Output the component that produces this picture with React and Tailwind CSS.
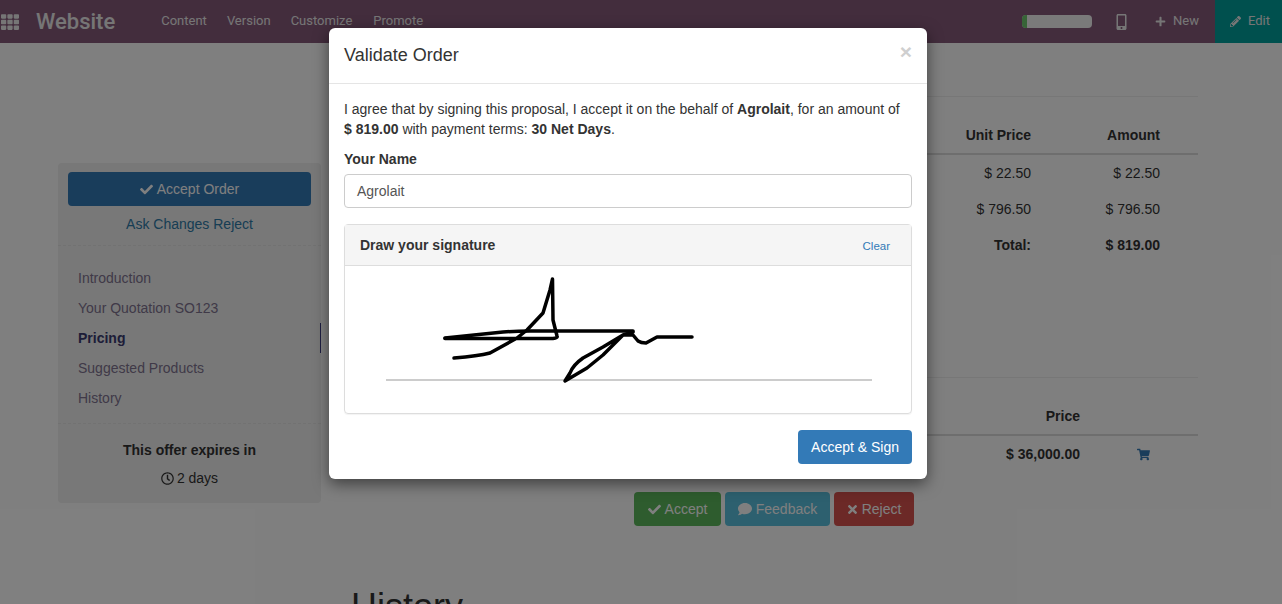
import { FaTh, FaMobileAlt, FaPlus, FaPencilAlt, FaCheck, FaComment, FaTimes, FaShoppingCart, FaRegClock } from "react-icons/fa";

function Navbar() {
  return (
    <div className="flex h-[43px] items-center bg-[#875a7b] font-['Roboto',sans-serif] text-[#ededed]">
      <FaTh className="ml-[1px] h-[18px] w-[18px]" />
      <span className="ml-[17px] mr-[46px] -mt-[1px] text-[22px] font-medium">Website</span>
      <div className="-mt-[1px] flex gap-5 text-[13px]">
        <span>Content</span>
        <span>Version</span>
        <span>Customize</span>
        <span className="ml-[1px]">Promote</span>
      </div>
      <div className="ml-auto flex h-full items-center">
        <div className="-mt-[1px] flex h-[13px] w-[70px] overflow-hidden rounded bg-[#f5f5f5]">
          <div className="w-[5px] bg-[#6ec96e]" />
        </div>
        <FaMobileAlt className="ml-[24px] h-[16px] w-[11px]" />
        <FaPlus className="ml-[28px] h-[11px] w-[11px]" />
        <span className="ml-[7px] -mt-[1px] text-[13px]">New</span>
        <div className="ml-[16px] flex h-full w-[67px] items-center bg-[#00a09d] pb-[1px] pl-[15px] text-[13px]">
          <FaPencilAlt className="mr-[7px] h-[11px] w-[11px]" />
          <span>Edit</span>
        </div>
      </div>
    </div>
  );
}

function Sidebar() {
  const items = ["Introduction", "Your Quotation SO123", "Pricing", "Suggested Products", "History"];
  return (
    <div className="ml-[58px] mt-[120px] h-[340px] w-[263px] shrink-0 rounded bg-[#f0f0f0]">
      <div className="border-b border-dashed border-[#e4e4e4] px-[10px] pb-[10px] pt-[9px] text-center">
        <div className="flex h-[34px] items-center justify-center rounded bg-[#337ab7] text-white">
          <FaCheck className="mr-[4px] h-[13px] w-[13px]" />
          Accept Order
        </div>
        <div className="mt-[8px] text-[#2f7ba8]">Ask Changes Reject</div>
      </div>
      <div className="border-b border-dashed border-[#e4e4e4] pb-[10px] pt-[17px]">
        {items.map((item) => (
          <div
            key={item}
            className={
              item === "Pricing"
                ? "h-[30px] border-r border-[#3a3a80] pl-[20px] leading-[30px] font-bold text-[#3a3a70]"
                : "h-[30px] pl-[20px] leading-[30px] text-[#807490]"
            }
          >
            {item}
          </div>
        ))}
      </div>
      <div className="pt-[16px] text-center text-[#333]">
        <div className="font-bold">This offer expires in</div>
        <div className="mt-[7px] flex items-center justify-center">
          <FaRegClock className="mr-[3px] h-[13px] w-[13px]" />2 days
        </div>
      </div>
    </div>
  );
}

function Main() {
  return (
    <div className="ml-[30px] w-[847px] pt-[53px] text-[#333]">
      <div className="border-t border-[#eee]" />
      <div className="mt-[18px] flex h-[40px] items-center justify-end border-b-2 border-[#ddd] pr-[38px] pt-[2px] font-bold">
        <span>Unit Price</span>
        <span className="w-[129px] text-right">Amount</span>
      </div>
      <div className="flex h-[36px] items-center justify-end pr-[38px]">
        <span>$ 22.50</span>
        <span className="w-[129px] text-right">$ 22.50</span>
      </div>
      <div className="flex h-[36px] items-center justify-end pr-[38px]">
        <span>$ 796.50</span>
        <span className="w-[129px] text-right">$ 796.50</span>
      </div>
      <div className="flex h-[36px] items-center justify-end pr-[38px] font-bold">
        <span>Total:</span>
        <span className="w-[129px] text-right">$ 819.00</span>
      </div>
      <div className="mt-[114px] border-t border-[#eee]" />
      <div className="flex h-[58px] items-end justify-end border-b-2 border-[#ddd] pb-[7px] pr-[118px] font-bold">
        Price
      </div>
      <div className="flex h-[37px] items-center justify-end pr-[48px]">
        <span className="font-bold">$ 36,000.00</span>
        <FaShoppingCart className="ml-[57px] h-[13px] w-[13px] text-[#337ab7]" />
      </div>
      <div className="mt-[19px] flex gap-1 pl-[283px] text-white">
        <div className="flex h-[34px] w-[87px] items-center justify-center rounded bg-[#5cb85c]">
          <FaCheck className="mr-[4px] h-[13px] w-[13px]" />
          Accept
        </div>
        <div className="flex h-[34px] w-[105px] items-center justify-center rounded bg-[#5bc0de]">
          <FaComment className="mr-[4px] h-[14px] w-[14px]" />
          Feedback
        </div>
        <div className="flex h-[34px] w-[80px] items-center justify-center rounded bg-[#d9534f]">
          <FaTimes className="mr-[4px] h-[13px] w-[11px]" />
          Reject
        </div>
      </div>
      <h1 className="mt-[61px] text-[36px] leading-[40px] text-[#333]">History</h1>
    </div>
  );
}

function Signature() {
  return (
    <svg className="block h-[147px] w-[566px]" viewBox="345 266 566 147" fill="none">
      <path d="M386 380H872" stroke="#ccc" strokeWidth="2" />
      <g stroke="#000" strokeWidth="3.5" strokeLinecap="round" strokeLinejoin="round">
        <path d="M445 338L503 332Q515 331 530 331H633" />
        <path d="M445 338.5H553Q558 338 557 336L553 320L552.5 279L550 290L543 313L527 330L517 338L490 353Q478 356 454 358" />
        <path d="M633 332L623 335L603 347L583 358Q573 365 570 373L565 381L587 368L603 355L623 335H633L638 341Q641 343 646 343L657 337H692" />
      </g>
    </svg>
  );
}

function Modal() {
  return (
    <div className="absolute left-[329px] top-[28px] z-10 h-[451px] w-[598px] rounded-md bg-white text-[#333] shadow-[0_5px_15px_rgba(0,0,0,0.5)]">
      <div className="flex h-[56px] items-center justify-between border-b border-[#e5e5e5] px-[15px]">
        <span className="text-[18px]">Validate Order</span>
        <span className="-mt-[8px] text-[21px] font-bold text-[#cfcfcf]">×</span>
      </div>
      <div className="px-[15px] pt-[15px]">
        <p className="leading-[20px]">
          I agree that by signing this proposal, I accept it on the behalf of <b>Agrolait</b>, for an amount of
          <br />
          <b>$ 819.00</b> with payment terms: <b>30 Net Days</b>.
        </p>
        <div className="mt-[10px] font-bold leading-[20px]">Your Name</div>
        <div className="mt-[5px] flex h-[34px] items-center rounded border border-[#ccc] px-[12px] text-[#555]">
          Agrolait
        </div>
        <div className="mt-[16px] h-[190px] rounded border border-[#ddd] shadow-[0_1px_1px_rgba(0,0,0,0.05)]">
          <div className="flex h-[41px] items-center justify-between border-b border-[#ddd] bg-[#f5f5f5] pl-[15px] pr-[21px]">
            <span className="font-bold">Draw your signature</span>
            <span className="mt-[3px] text-[11.5px] text-[#337ab7]">Clear</span>
          </div>
          <Signature />
        </div>
        <div className="mt-[16px] flex justify-end">
          <div className="flex h-[34px] items-center rounded bg-[#337ab7] px-[13px] text-white">Accept &amp; Sign</div>
        </div>
      </div>
    </div>
  );
}

export default function App() {
  return (
    <div className="relative h-[604px] w-[1282px] overflow-hidden bg-white font-['Liberation_Sans',Arial,sans-serif] text-[14px]">
      <Navbar />
      <div className="flex items-start">
        <Sidebar />
        <Main />
      </div>
      {/* backdrop */}
      <div className="absolute inset-0 bg-black/50" />
      <Modal />
    </div>
  );
}
